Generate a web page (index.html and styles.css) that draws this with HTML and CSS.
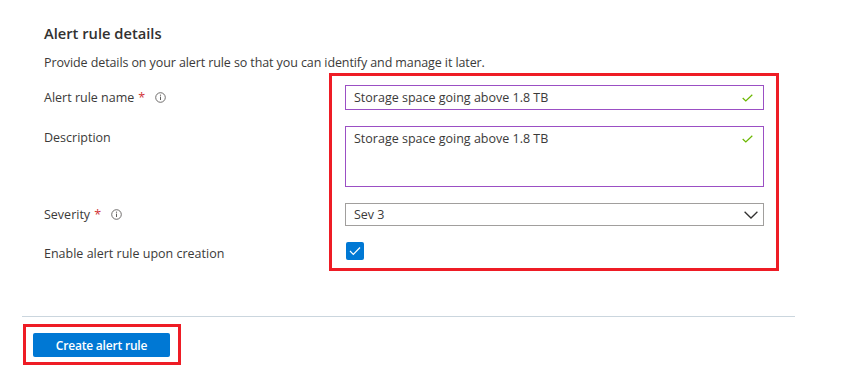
FILE: index.html
```html
<!DOCTYPE html>
<html lang="en">
<head>
<meta charset="utf-8">
<title>Alert rule details</title>
<link rel="stylesheet" href="styles.css">
</head>
<body>
<div class="page">
  <section class="details">
    <h2 class="title">Alert rule details</h2>
    <p class="lead">Provide details on your alert rule so that you can identify and manage it later.</p>
    <div class="form">
      <div class="label r1">Alert rule name <span class="req">*</span>
        <svg class="info" width="11" height="11" viewBox="0 0 11 11"><circle cx="5.5" cy="5.5" r="4.8" fill="none" stroke="#605e5c" stroke-width="0.9"/><line x1="5.5" y1="4.6" x2="5.5" y2="8" stroke="#605e5c" stroke-width="1"/><circle cx="5.5" cy="3.2" r="0.6" fill="#605e5c"/></svg>
      </div>
      <div class="field input r1">
        <span class="value">Storage space going above 1.8 TB</span>
        <svg class="ok" width="11" height="8" viewBox="0 0 11 8"><polyline points="0.7,4 3.8,7 10.3,0.7" fill="none" stroke="#6bb700" stroke-width="1.2"/></svg>
      </div>

      <div class="label top r2">Description</div>
      <div class="field textarea r2">
        <span class="value">Storage space going above 1.8 TB</span>
        <svg class="ok" width="11" height="8" viewBox="0 0 11 8"><polyline points="0.7,4 3.8,7 10.3,0.7" fill="none" stroke="#6bb700" stroke-width="1.2"/></svg>
      </div>

      <div class="label r3">Severity <span class="req">*</span>
        <svg class="info" width="11" height="11" viewBox="0 0 11 11"><circle cx="5.5" cy="5.5" r="4.8" fill="none" stroke="#605e5c" stroke-width="0.9"/><line x1="5.5" y1="4.6" x2="5.5" y2="8" stroke="#605e5c" stroke-width="1"/><circle cx="5.5" cy="3.2" r="0.6" fill="#605e5c"/></svg>
      </div>
      <div class="field select r3">
        <span class="value">Sev 3</span>
        <svg class="chev" width="14" height="8" viewBox="0 0 14 8"><polyline points="0.6,0.8 7,7 13.4,0.8" fill="none" stroke="#323130" stroke-width="1.3"/></svg>
      </div>

      <div class="label low r4">Enable alert rule upon creation</div>
      <div class="checkcell r4">
        <span class="checkbox"><svg width="12" height="10" viewBox="0 0 12 10"><polyline points="1,5 4.3,8.3 11,1.5" fill="none" stroke="#fff" stroke-width="1.2"/></svg></span>
      </div>

      <div class="highlight"></div>
    </div>
  </section>
  <hr class="divider">
  <div class="actions">
    <span class="btn-highlight"><button class="btn" type="button">Create alert rule</button></span>
  </div>
</div>
</body>
</html>
```
FILE: styles.css
```css
* { box-sizing: border-box; }
html, body { margin: 0; background: #fff; }
body {
  font-family: "Open Sans", "Noto Sans", "Liberation Sans", sans-serif;
  color: #3b3a39;
  font-size: 12.5px;
}
.page {
  padding: 23px 0 0 22px;
  width: 796px;
}
.details { padding-left: 22px; }
.title {
  margin: 0;
  font-size: 14.7px;
  line-height: 20px;
  font-weight: 600;
  color: #323130;
}
.lead {
  margin: 11px 0 0;
  font-size: 12.5px;
  line-height: 18px;
  letter-spacing: -0.1px;
}
.form {
  margin-top: 13px;
  display: grid;
  grid-template-columns: 301px 419px;
  row-gap: 16px;
}
.r1 { grid-row: 1; }
.r2 { grid-row: 2; }
.r3 { grid-row: 3; }
.r4 { grid-row: 4; }
.highlight {
  grid-column: 2;
  grid-row: 1 / 5;
  margin: -12px -15px -8px -16px;
  border: 3px solid #ee1c25;
  z-index: 1;
  pointer-events: none;
}
.label {
  grid-column: 1;
  align-self: center;
  line-height: 18px;
  display: flex;
  align-items: center;
  white-space: nowrap;
}
.label.top { align-self: start; padding-top: 3px; }
.label.low { align-self: start; padding-top: 3px; }
.req { color: #d13438; margin-left: 4px; }
.info { margin-left: 10px; }
.field {
  grid-column: 2;
  position: relative;
  display: flex;
  justify-content: space-between;
  border: 1px solid #9b4fc4;
  background: #fff;
  padding: 0 10px 0 8px;
}
.value { line-height: 18px; }
.input { height: 25px; align-items: center; }
.textarea { height: 61px; align-items: flex-start; padding-top: 3px; }
.textarea .ok { margin-top: 5px; }
.select {
  height: 23px;
  align-items: center;
  border-color: #a19f9d;
  padding-right: 5px;
}
.chev { margin-top: 1px; }
.checkcell { grid-column: 2; display: flex; align-items: flex-start; }
.checkbox {
  margin-left: 1px;
  width: 18px;
  height: 18px;
  border-radius: 2px;
  background: #0078d4;
  display: flex;
  align-items: center;
  justify-content: center;
}
.divider {
  margin: 53px 0 0;
  border: 0;
  border-top: 1px solid #cbd6de;
  width: 773px;
}
.actions { margin-top: 7px; }
.btn-highlight {
  display: inline-block;
  margin-left: 1px;
  border: 3px solid #ee1c25;
  padding: 6px 8px 5px 7px;
}
.btn {
  display: block;
  width: 137px;
  height: 24px;
  border: 0;
  border-radius: 2px;
  background: #0078d4;
  color: #fff;
  font-family: "Open Sans", "Noto Sans", sans-serif;
  font-weight: 600;
  font-size: 12px;
  letter-spacing: -0.2px;
  padding: 0;
}
```
